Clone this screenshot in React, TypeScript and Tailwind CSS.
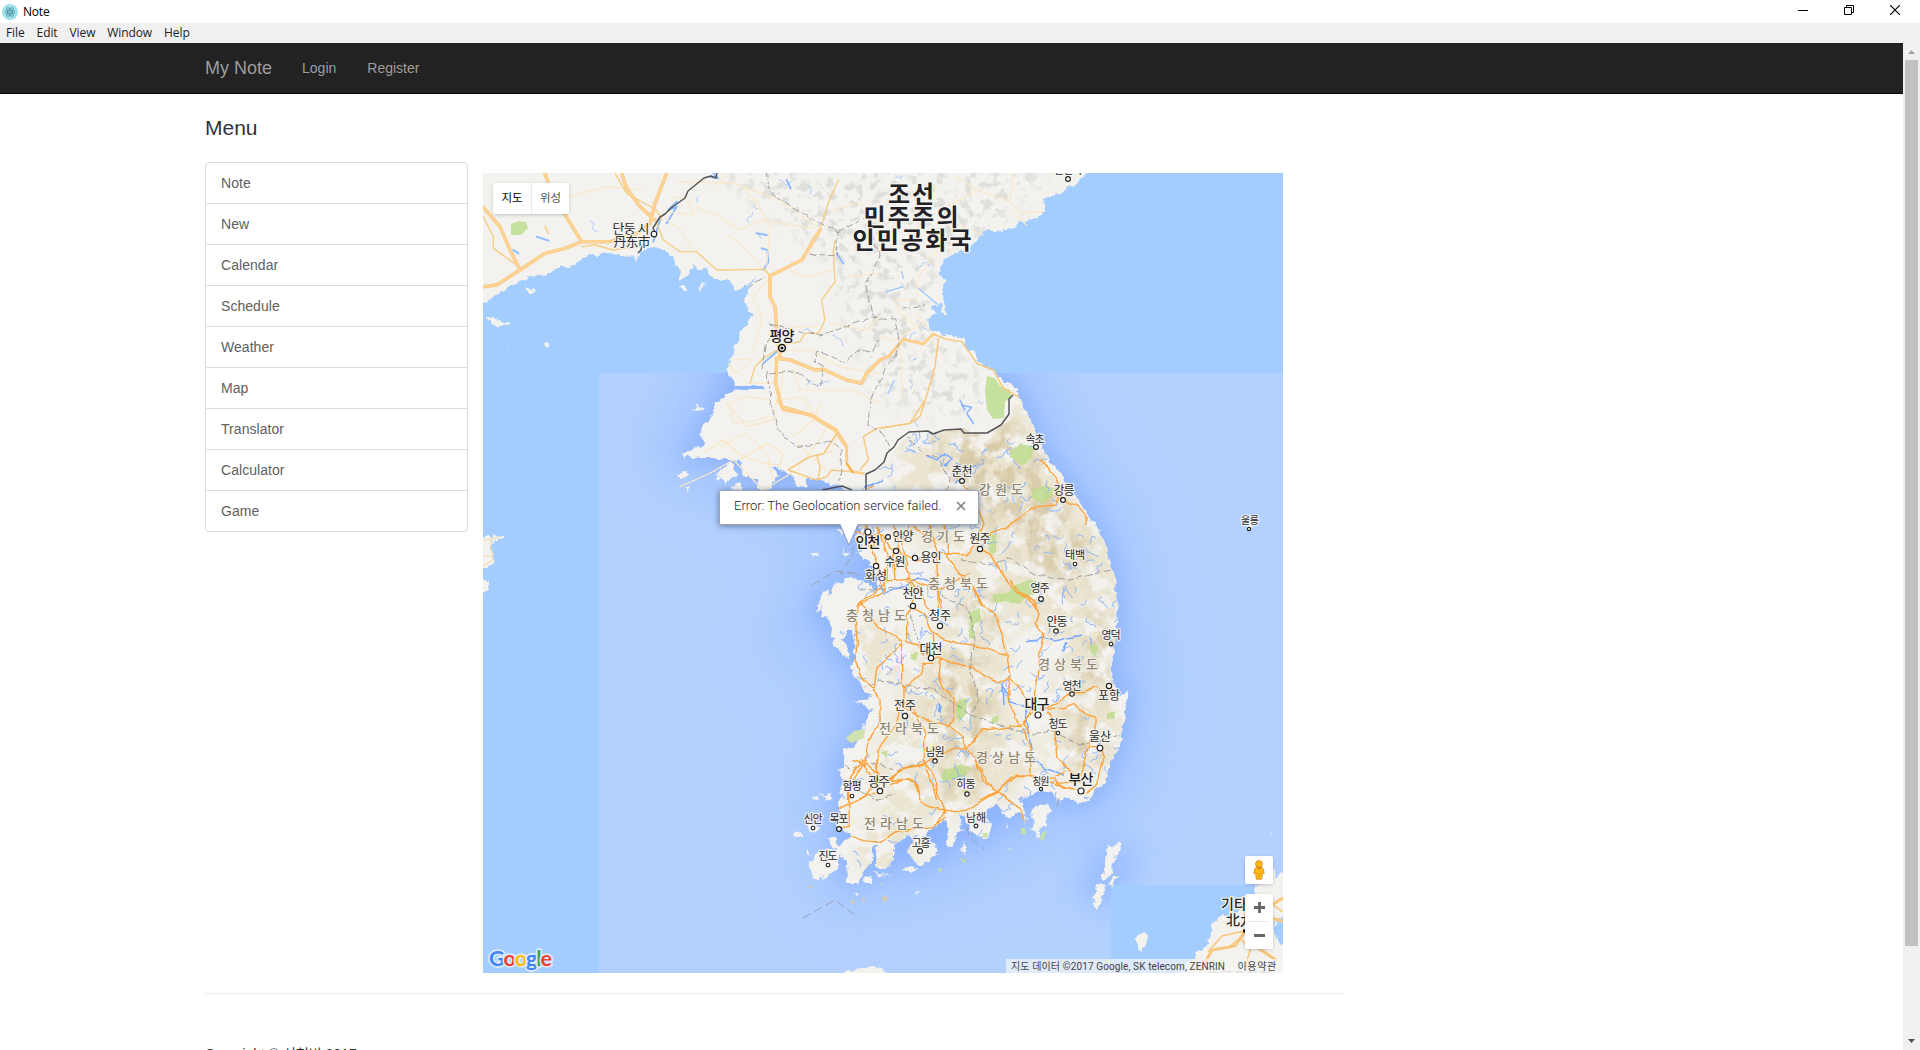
import React from "react";

const KR = '"Roboto", "Noto Sans CJK KR", sans-serif';

const menuItems = ["Note", "New", "Calendar", "Schedule", "Weather", "Map", "Translator", "Calculator", "Game"];

const MAINLAND =
  "M470 160 L470 307 L483 303 L492 297 L500 293 L513 285 L530 278 L550 273 L558 267 L575 265 L580 260 L593 255 L613 254 L627 257 L632 254 L636 263 L640 252 L653 247 L663 250 L673 257 L677 267 L681 269 L679 281 L688 275 L693 265 L700 270 L707 267 L710 275 L718 282 L728 280 L738 291 L747 285 L757 277 L750 286 L747 292 L745 303 L752 315 L742 330 L736 345 L732 357 L726 370 L735 382 L733 392 L725 397 L713 403 L715 410 L707 423 L700 432 L704 443 L695 449 L682 453 L684 457 L693 458 L710 457 L718 460 L727 459 L740 460 L743 475 L757 480 L758 489 L770 489 L778 476 L772 466 L781 471 L793 475 L797 487 L808 488 L806 478 L820 480 L840 487 L855 495 L857 524 L862 532 L853 537 L863 547 L857 553 L866 560 L873 567 L879 580 L876 588 L863 582 L850 577 L843 581 L833 586 L831 596 L827 588 L819 602 L815 612 L823 606 L821 618 L828 617 L832 630 L834 645 L846 658 L851 655 L843 640 L846 628 L853 630 L855 645 L855 663 L851 668 L857 680 L863 690 L872 697 L862 701 L853 702 L872 708 L864 723 L862 735 L855 745 L843 750 L845 762 L837 772 L843 780 L840 790 L843 797 L839 803 L841 815 L837 824 L852 835 L843 842 L835 852 L847 861 L848 883 L858 883 L863 872 L872 863 L873 845 L877 843 L876 867 L887 868 L893 860 L893 847 L907 835 L918 837 L910 845 L906 852 L911 857 L916 865 L923 867 L938 853 L936 845 L928 842 L931 838 L923 837 L934 827 L944 820 L948 830 L946 843 L952 848 L957 835 L963 830 L958 815 L966 817 L970 832 L976 836 L990 838 L991 826 L986 812 L997 804 L1005 815 L1010 819 L1020 812 L1028 823 L1024 808 L1018 800 L1028 797 L1040 790 L1053 792 L1058 802 L1065 797 L1077 803 L1087 800 L1097 790 L1105 783 L1110 763 L1115 755 L1120 747 L1121 735 L1123 723 L1126 705 L1128 690 L1118 697 L1115 687 L1110 670 L1112 660 L1116 640 L1118 623 L1115 610 L1117 605 L1115 577 L1108 560 L1107 547 L1098 528 L1087 513 L1077 497 L1063 477 L1052 463 L1043 450 L1037 437 L1032 423 L1020 397 L1017 388 L1003 383 L997 373 L980 362 L968 347 L963 338 L952 335 L942 335 L930 328 L928 320 L937 312 L930 307 L942 303 L943 315 L946 315 L944 298 L942 290 L946 282 L940 275 L940 267 L948 257 L960 252 L970 250 L975 242 L985 230 L1003 232 L1013 227 L1015 230 L1020 222 L1033 218 L1045 212 L1043 198 L1063 192 L1077 182 L1087 173 L1090 160 Z";

const ISLANDS =
  "M526 289l6-1l2 4l-4 2zM487 317l12 3l9 4l-1 3l-10-2l-11-4zM545 344l3 -3v7zM507 347l2 0l-1 3zM679 286l6 0l2 4l-3 0zM698 289l7-8l1 5l-5 7zM692 409l6-3l5 3l-4 2zM677 474l9-3l3 3l-8 5zM684 489l4-3l-1 5zM713 475l12-9l5-4l4 5l2 9l-6 3l-6 6l-2-6l-6-2l4-3zM732 486l7-2l4 6l-10 0zM838 530l5-1l-1 6zM843 550l8 4l-7 1zM813 554l2-1l3 3l-3 2zM811 870l-2-7l7-9l14-6l8 7l0 14l-12 8l-13 2zM812 797l6-3l2 4l-8 1zM820 795l12-1l1 5l-7 3zM793 835l6-3l4 3l-6 3zM805 825l14 2l-4 6zM805 851l4-2l0 8zM828 837l6 0l6 14l-8-4zM863 877l9-2l-1 10l-7 0zM874 872l10 2l-5 4zM885 874l4 1l-3 2zM903 870l7-5l6 4l-4 4zM960 849l4-7l3 3l-1 9zM1030 818l5-12l12-3l6 9l-6 2l-1 11l-4 1l-4 12l-3-8l-6-1l6-7zM1106 849l16-7l0 6l-8 8l-2 17l-8 8l-2-1l3-17zM1096 883l10 3l-3 10l-6 12l-4-2zM1113 876l4 0l-5 10l-3-3zM843 974l8-4l18-3l14 2l5 8h-40zM1137 936l5-3l6 4l-1 6l-7 8l-3-5zM1247 522l5-2l2 5l-5 3zM854 893l4 0l0 4zM916 893l3-1l-1 3zM1008 847l4 1l-4 1zM1005 825l4 2l-3 1zM1271 832l3 2l-2 1z";

const SHANDONG = "M470 535l14 1l10 0l10 1l-1 2l-7 0l-6 6l2 9l4 7l-4 4l-9 5h-14zM470 580l20 0l-1 9l-5 4l-14 0z";
const KYUSHU = "M1183 990l4-17l-6 2l7-14l8-4l0-5l6-3l6-4l3-20l10-9l10 2l8-8l12-8l6-18l2-7l10-4l4-4l0 9l3 0l10-8v46l-10 4l-4 12l10 12h10v60z";

const ROADS_SOUTH =
  "M255 10L215 45L175 70L165 110L172 190L165 240L180 285L220 325L240 355L240 430L205 480L195 540L155 610L145 660M180 62L215 120L245 150L280 165L305 185L305 310L315 325L315 380L340 400L375 420L410 430L450 440L490 470L500 505L525 535L560 600L585 635L540 660M235 0L245 20M320 0L345 30L335 75L320 110L320 185M320 185L355 195L365 215L395 235L415 235M330 80L370 100L385 130L400 155L430 175L480 193L560 203L600 222L620 225M410 0L415 35L425 90M400 155L402 220L420 235L415 275L430 320L462 355L460 410L445 445M305 190L230 265L222 330L235 350M520 20L550 75L585 105L605 160L620 220L630 290L625 360L650 420L670 450L690 500L693 590M630 0L655 35L705 65L715 100L705 130L732 160L720 210L715 290L700 340L705 375M420 235L470 255L515 258L550 285L590 305L630 295L655 315L680 360L690 400L675 430L600 445L545 450L500 505L450 510L405 535L370 550L310 565L270 595L240 630M315 325L360 285L370 250L400 250M300 380L290 430L240 500L230 560L240 600L180 660M190 540L235 580M340 385L375 460L372 550L400 620L410 660M270 600L330 600L350 620L360 660M705 390L670 430L690 460M720 385L745 380L785 360L820 335L850 335L885 320L925 345M745 385L790 385L825 370L855 405L885 415L885 460M745 395L765 450L770 530L810 570L830 590M840 590L860 520L870 480M870 500L900 500L910 530L890 610L860 640M693 590L635 590L600 630L580 640M693 590L760 595L790 625L830 630M760 590L800 575";
const ROADS_GANGWON =
  "M105 435L120 500L160 595L165 630L80 680M75 455L160 470L180 505L260 540L330 520L410 525L440 490L490 455L530 440L590 400L620 380L680 375L685 310L660 265L630 240M690 350L740 375L768 410L768 435M450 505L490 530L520 590L560 640L600 660L625 690M445 390L462 430L440 490M400 315L410 330M345 430L355 500L350 530L390 580L420 610L460 680M195 435L205 500L240 600L270 640L300 690M300 435L320 510L325 690M140 440L175 530L170 600M235 435L215 490L235 560M250 435L285 470L310 480M165 600L235 595L330 630L420 580M190 520L195 600M150 445L130 500M120 460L110 435";
const ROADS_JEOLLA =
  "M150 145L175 130L270 92M185 0L220 10L270 92M260 0L270 60M220 0L175 60L178 200L150 205M185 228L220 245L270 250L320 215L380 205L430 200L465 172M300 70L350 58L380 75L390 125L430 145L500 155L530 150L620 95L680 45L720 50M555 0L580 60L620 95L690 145L710 190M400 0L440 60L440 100L465 160M400 15L340 25L300 60M440 190L465 150M720 50L800 75L850 90M800 70L870 65";

const ROADS_NORTH_BIG =
  "M10 350L50 345L120 300L195 250L255 235L305 215L390 215L470 190L510 160L525 100L560 10M195 10L215 70L305 215M10 112L60 170L90 240L120 300M425 10L440 55L480 110L525 150M1020 180L965 270L905 300L870 318L870 380L885 410L890 480L900 560M890 565L930 570L1005 600L1030 598L1100 630L1145 640L1160 610L1200 570M890 565L887 640L905 710L990 735L1065 780L1100 830";
const ROADS_NORTH_MID =
  "M530 160L550 210L600 245L650 245L710 300L855 298L868 315M405 10L440 70L530 120L545 150M305 230L345 225L400 240L470 230M10 140L40 200L40 235L110 285M890 540L850 565L825 590L810 640M905 525L960 515L975 490L1015 490L1035 450L1025 390L1065 335L1060 240L1065 210M1020 180L1045 100L1075 30M205 190L195 170";
const ROADS_NORTH_THIN =
  "M200 50L270 80L380 50L490 60M560 125L640 135L620 90L580 80M650 110L720 140L780 180L850 150L1000 175M550 140L600 180L640 240M590 35L760 40L900 90L1010 170M870 320L790 230L740 190M870 320L820 380L845 450L820 540M905 540L990 540L1080 590L1200 610M1100 320L1200 310M930 300L980 320L1060 300M760 570L820 565L770 610L745 580M890 500L940 470L1010 470M910 600L900 690L970 680L1000 730M870 690L800 680L750 700L760 760L830 750L870 740M940 600L960 660L1120 660L1200 700M720 830L800 790L860 850L880 930M810 640L890 640M1050 460L1160 480L1200 440M780 40L830 100L870 170L860 290M1060 120L1130 100L1200 130M690 910L760 870L850 960L950 900L1010 820L1050 760M600 950L690 910M850 960L860 1040M700 60L740 10M950 820L1040 900";

const RIVERS_BIG =
  "M560 160L590 110L565 120L590 95M700 10L715 25L690 20M845 235L862 240L865 275L850 300M540 150L520 215M760 655L800 658L820 648L850 655M830 190L860 195M1070 250L1090 280M920 30L932 55M170 200L205 212M100 240L115 250M890 545L850 580";

const SOUTH_CLIP =
  "M860 500L866 480L885 461L905 439L914 431L935 432L965 428L970 432L993 432L1010 420L1014 400L1017 396L1040 390L1150 480V900H760V500Z";

type Label = [string, number, number, number, number, number?];
const cities: Label[] = [
  ["단둥 시", 631, 228, 37, 13], ["丹东市", 632, 241, 37, 13],
  ["속초", 1035, 439, 19, 11], ["춘천", 962, 472, 21, 12], ["강릉", 1064, 491, 21, 12], ["원주", 980, 539, 21, 12],
  ["안양", 903, 537, 21, 12], ["수원", 895, 562, 21, 12], ["용인", 931, 558, 21, 12], ["화성", 876, 576, 22, 12],
  ["천안", 913, 594, 21, 12], ["영주", 1040, 588, 19, 11], ["태백", 1075, 555, 20, 11], ["청주", 940, 616, 22, 12],
  ["안동", 1057, 622, 21, 12], ["영덕", 1111, 635, 19, 11], ["대전", 931, 648, 23, 13], ["영천", 1072, 686, 19, 11],
  ["포항", 1109, 696, 22, 12], ["전주", 905, 706, 22, 12], ["청도", 1058, 724, 19, 11], ["울산", 1100, 737, 22, 12],
  ["남원", 935, 752, 19, 11], ["창원", 1041, 781, 17, 10], ["광주", 879, 781, 22, 13], ["함평", 852, 786, 19, 11],
  ["하동", 966, 784, 19, 11], ["신안", 813, 819, 19, 11], ["목포", 839, 819, 19, 11], ["남해", 976, 818, 20, 11],
  ["고흥", 921, 843, 19, 11], ["진도", 828, 856, 19, 11], ["울릉", 1250, 520, 18, 10], ["단천시", 1068, 170, 28, 11],
];
const bigCities: Label[] = [
  ["평양", 782, 336, 25, 14], ["인천", 868, 542, 25, 14], ["대구", 1037, 704, 25, 14], ["부산", 1081, 779, 25, 14],
];
const provinces: Label[] = [
  ["강원도", 1001, 489, 44, 13], ["경기도", 943, 536, 44, 13], ["충청북도", 958, 583, 60, 13], ["충청남도", 876, 615, 60, 13],
  ["경상북도", 1068, 664, 60, 13], ["전라북도", 909, 728, 60, 13], ["경상남도", 1006, 757, 60, 13], ["전라남도", 894, 823, 60, 13],
];
const countries: Label[] = [
  ["조선", 911, 194, 46, 24], ["민주주의", 911, 217, 95, 24], ["인민공화국", 912, 240, 119, 24],
];
const dots: [number, number, number][] = [
  [654, 234, 2.8], [1036, 447, 2.4], [962, 481, 2.4], [1063, 500, 2.4], [980, 549, 2.6], [868, 532, 3], [888, 537, 2.4],
  [896, 551, 2.6], [915, 558, 2.6], [876, 566, 2.6], [913, 606, 2.6], [1041, 599, 2.4], [1075, 564, 1.8], [940, 626, 2.6],
  [1056, 631, 2.2], [1111, 644, 1.8], [931, 658, 2.7], [1072, 694, 2.2], [1109, 686, 2.6], [1038, 715, 3], [905, 716, 2.6],
  [1058, 733, 1.8], [1100, 748, 2.8], [935, 761, 2.2], [1041, 789, 1.6], [1081, 791, 3], [880, 791, 2.7], [852, 796, 1.8],
  [967, 794, 2.2], [813, 828, 1.8], [839, 829, 2.4], [976, 826, 1.9], [920, 851, 2.4], [828, 865, 1.8], [1249, 529, 1.6], [1068, 179, 2.4],
];

// Repeatable pseudo-random streams scattered over the terrain.
function makeStreams(count: number, x0: number, y0: number, w: number, h: number, seed: number) {
  let s = seed;
  const rnd = () => {
    s = (s * 16807) % 2147483647;
    return s / 2147483647;
  };
  let d = "";
  for (let i = 0; i < count; i++) {
    d += `M${(x0 + rnd() * w).toFixed(1)} ${(y0 + rnd() * h).toFixed(1)}`;
    let a = rnd() * 6.28;
    const n = 3 + Math.floor(rnd() * 5);
    for (let k = 0; k < n; k++) {
      a += (rnd() - 0.5) * 2.6;
      d += `l${(Math.cos(a) * 2.4).toFixed(1)} ${(Math.sin(a) * 2.4).toFixed(1)}`;
    }
  }
  return d;
}
const southStreams = makeStreams(300, 850, 430, 280, 430, 77);
const northStreams = makeStreams(30, 490, 175, 500, 290, 1213);

function Labels({ items, fill, weight, halo }: { items: Label[]; fill: string; weight: number; halo: number }) {
  return (
    <g
      fontFamily='"Noto Sans CJK KR", sans-serif'
      fontWeight={weight}
      fill={fill}
      stroke="#f5f4f0"
      strokeWidth={halo}
      strokeOpacity="0.85"
      strokeLinejoin="round"
      paintOrder="stroke"
      textAnchor="middle"
    >
      {items.map(([t, x, y, w, size]) => (
        <text key={t} x={x} y={y + size * 0.36} fontSize={size} textLength={w}>
          {t}
        </text>
      ))}
    </g>
  );
}

function KoreaMap() {
  return (
    <svg className="block h-[800px] w-[800px]" viewBox="483 173 800 800">
      <defs>
        <filter id="coast" x="-5%" y="-5%" width="110%" height="110%" colorInterpolationFilters="sRGB">
          <feTurbulence type="fractalNoise" baseFrequency="0.14" numOctaves="3" seed="4" />
          <feDisplacementMap in="SourceGraphic" scale="8" xChannelSelector="R" yChannelSelector="G" />
        </filter>
        <filter id="wobble" x="-5%" y="-5%" width="110%" height="110%" colorInterpolationFilters="sRGB">
          <feTurbulence type="fractalNoise" baseFrequency="0.08" numOctaves="2" seed="9" />
          <feDisplacementMap in="SourceGraphic" scale="5" xChannelSelector="R" yChannelSelector="G" />
        </filter>
        <filter id="soft" filterUnits="userSpaceOnUse" x="400" y="100" width="950" height="950"><feGaussianBlur stdDeviation="13" /></filter>
        <filter id="wide" filterUnits="userSpaceOnUse" x="400" y="100" width="950" height="950"><feGaussianBlur stdDeviation="32" /></filter>
        <filter id="blob"><feGaussianBlur stdDeviation="10" /></filter>
        <filter id="tan" x="0" y="0" width="100%" height="100%" colorInterpolationFilters="sRGB">
          <feTurbulence type="fractalNoise" baseFrequency="0.045 0.055" numOctaves="5" seed="21" />
          <feColorMatrix values="0 0 0 0 0.918  0 0 0 0 0.894  0 0 0 0 0.816  9 0 0 0 -3.7" />
        </filter>
        <filter id="brown" x="0" y="0" width="100%" height="100%" colorInterpolationFilters="sRGB">
          <feTurbulence type="fractalNoise" baseFrequency="0.07 0.06" numOctaves="5" seed="33" />
          <feColorMatrix values="0 0 0 0 0.80  0 0 0 0 0.73  0 0 0 0 0.56  5 0 0 0 -2.1" />
        </filter>
        <filter id="relief" x="0" y="0" width="100%" height="100%" colorInterpolationFilters="sRGB">
          <feTurbulence type="fractalNoise" baseFrequency="0.11" numOctaves="4" seed="5" />
          <feColorMatrix values="0 0 0 0 0.87  0 0 0 0 0.87  0 0 0 0 0.855  7 0 0 0 -3.7" />
        </filter>
        <clipPath id="landClip"><path d={MAINLAND} /></clipPath>
        <clipPath id="southClip"><path d={SOUTH_CLIP} /></clipPath>
        <clipPath id="paleSea"><path d="M599 373H1283V885H1111V973H599Z" /></clipPath>
        <mask id="hills" maskUnits="userSpaceOnUse" x="483" y="173" width="800" height="800">
          <g fill="#fff" filter="url(#blob)">
            <path d="M895 440L1020 395L1070 490L1125 570L1112 660L1060 655L1000 610L930 560L890 490Z" />
            <path d="M920 660L955 590L1010 630L1010 720L1060 770L970 815L900 830L865 780L890 720Z" />
            <ellipse cx="1085" cy="715" rx="38" ry="65" /><ellipse cx="880" cy="650" rx="30" ry="35" /><ellipse cx="885" cy="845" rx="30" ry="30" />
          </g>
        </mask>
        <mask id="peaks" maskUnits="userSpaceOnUse" x="483" y="173" width="800" height="800">
          <g fill="#fff" opacity="0.85" filter="url(#blob)">
            <path d="M925 440L1010 420L1055 490L1100 560L1060 590L1005 535L950 490Z" />
            <ellipse cx="962" cy="705" rx="30" ry="60" /><ellipse cx="1098" cy="650" rx="14" ry="50" /><ellipse cx="1085" cy="735" rx="16" ry="40" />
            <ellipse cx="985" cy="610" rx="26" ry="18" /><ellipse cx="960" cy="780" rx="26" ry="20" />
          </g>
        </mask>
        <mask id="northHills" maskUnits="userSpaceOnUse" x="483" y="173" width="800" height="800">
          <path fill="#fff" filter="url(#blob)" d="M700 160L1060 160L1000 230L940 260L930 320L990 380L960 420L880 400L850 330L830 260Z" />
        </mask>
      </defs>

      <path fill="#a3ccff" d="M483 173H1283V973H483Z" />
      <g clipPath="url(#paleSea)">
        <path fill="#b3d1ff" d="M483 173H1283V973H483Z" />
        <path d={MAINLAND} fill="#8db3fd" stroke="#8db3fd" strokeWidth="50" opacity="0.4" filter="url(#wide)" />
        <path d={MAINLAND} fill="#80a9fb" stroke="#80a9fb" strokeWidth="10" opacity="0.65" filter="url(#soft)" />
        <path d="M1095 905L1120 845" stroke="#8db3fd" strokeWidth="44" opacity="0.6" filter="url(#soft)" />
      </g>

      <g filter="url(#coast)" fill="#f3f2ee">
        <path d={MAINLAND} />
        <path d={ISLANDS} />
        <path d={SHANDONG} />
        <path d={KYUSHU} />
      </g>
      <path d="M483 540L502 537M490 539L493 560L483 566M483 556L492 556" fill="none" stroke="#f5dcae" strokeWidth="1.2" />

      <g clipPath="url(#landClip)">
        <g mask="url(#northHills)"><rect x="483" y="173" width="800" height="300" filter="url(#relief)" /></g>
        <g clipPath="url(#southClip)">
          <g mask="url(#hills)"><rect x="830" y="390" width="310" height="490" filter="url(#tan)" /></g>
          <g mask="url(#peaks)"><rect x="830" y="390" width="310" height="490" opacity="0.7" filter="url(#brown)" /></g>
          <g fill="#bfdc8d" opacity="0.85" filter="url(#wobble)">
            <path d="M1010 451l12-8l13 4l-4 12l-7 6l-14-7zM1032 491l8-5l15 1l-4 10l-9 7l-10-6zM988 536l8-2l0 17l-7 4zM992 595l8-3l8 2l4-8l6-3l13-5l14 7l-12 12l-9 2l-5 5l-12-3l-13 2zM970 612l10-4l0 12l-6 5l1 14l-6-1zM959 700l9-2l-2 15l-8 9l-2-8zM992 718l8-4l-1 8l-6 2zM944 769l14-5l12 4l-5 9l-22 5l-3-7zM1090 645l8 2l-1 9l-8-4zM1107 712l8 0l-1 7l-7-1zM911 653l7-1l-2 9l-5-3zM882 752l6-1l-2 7zM963 792l5-3l1 7z" />
          </g>
          <path d={southStreams} fill="none" stroke="#86b1ff" strokeWidth="0.9" strokeLinejoin="round" />
          <g fill="none" stroke="#7aa9ff" strokeWidth="1.5" filter="url(#wobble)">
            <path d="M862 489l20-9M925 455l12 5l8-6l6 5l-6 7M956 462l10 8l12-4M963 478l-8 7M878 585l6 8l14-4l20-12l12 4M1004 705l-1-20l8 18l14 4l4 26l3 24l14 12l18 6M940 705l0 7M1027 643l16-5l12 3l26-6M1068 642l-6 10" />
            <path d="M938 704l3 3l-2 5z" fill="#7aa9ff" />
          </g>
        </g>
        <path d={northStreams} fill="none" stroke="#9cc4ff" strokeWidth="0.8" />
      </g>

      <path fill="#c5e19d" d="M987 376l8 2l5 8l10 4l1 7l-6 5l-1 16l-11 1l-6-9l-2-20z" />
      <path fill="#c5e19d" d="M511 224l8-3l7 1l2 6l-6 6l-2 1l-9 0z" />
      <path fill="#d0e2ae" d="M846 738l8-7l11-2l-1 9l-13 5z" />
      <path fill="#c5e19d" d="M1021 828l4 0l1 6l-5 0zM1042 833l4-2l-2 8l-4 2zM982 833l6 0l-2 6zM938 868l4 1l-3 4zM959 858l6 2l1 4zM880 883l3 0l-2 2z" />
      <path fill="#d4ccb3" d="M805 886l8 0l-1 2zM850 901l5-1l-2 5zM862 898l3 0l-1 7zM881 899l4-4l4 4l-4 3z" />

      <g transform="translate(480 170) scale(0.33333)" fill="none" strokeLinejoin="round" strokeLinecap="round">
        <path d={RIVERS_BIG} stroke="#90bdff" strokeWidth="6" />
        <path d="M750 655L790 650L845 655" stroke="#8fb5fc" strokeWidth="14" filter="url(#wobble)" />
        <path d={ROADS_NORTH_THIN} stroke="#fae8c8" strokeWidth="3.4" />
        <path d={ROADS_NORTH_MID} stroke="#f3cf87" strokeWidth="4.2" />
        <path d={ROADS_NORTH_BIG} stroke="#f2c27a" strokeWidth="10.5" />
        <path d={ROADS_NORTH_BIG} stroke="#fed393" strokeWidth="8" />
      </g>
      <g transform="translate(880 170) scale(0.33333)" fill="none" strokeLinejoin="round" strokeLinecap="round">
        <path d="M5 500L45 510L110 470L60 430L45 390L110 390L110 330L160 250L220 235M110 430L150 480M200 110L290 60L390 95L400 10M290 60L230 20M400 130L440 165M390 95L420 130L490 125M200 150L310 195M60 530L70 680" stroke="#fae8c8" strokeWidth="3.4" />
        <path d="M0 568L25 560L70 508L130 522L160 492" stroke="#fecf8a" strokeWidth="9" />
        <path d="M160 492L200 508L245 515L270 550L290 580L340 600L370 655L415 680M175 508L165 590L145 660L120 740L90 760L0 775" stroke="#f8c678" strokeWidth="4.2" />
        <path d="M240 690L255 720L245 705L275 712L260 730L280 760" stroke="#8db8ff" strokeWidth="5" />
        <path d="M115 355L175 405M65 305L70 325M20 365L70 350M100 570L108 565M25 670L42 632" stroke="#a0c8ff" strokeWidth="4" />
      </g>
      <g transform="translate(580 400) scale(0.33333)" fill="none" strokeLinejoin="round" strokeLinecap="round">
        <path d="M375 155L430 120L480 165L550 190L600 195L610 160L560 130L480 180M440 10L500 80L580 60L590 0M625 210L700 165L755 155L770 105M640 110L700 60L720 10" stroke="#fae5c0" strokeWidth="3.4" />
        <path d="M625 208L690 170L730 162L770 100M625 210L710 240L740 230L755 210L810 215M715 235L720 200L710 165M840 210L865 180L850 110L890 85L990 70L1035 0" stroke="#f6c97e" strokeWidth="4.2" />
        <path d="M595 0L610 30L695 45L770 90L800 140L800 190L815 215L850 220" stroke="#fecf8a" strokeWidth="8.5" />
        <path d="M800 190L820 218M865 265L880 258" stroke="#fda63d" strokeWidth="4" />
      </g>

      <g clipPath="url(#landClip)" fill="none" stroke="#9a9a9a" strokeWidth="0.9" strokeDasharray="7 2.5" filter="url(#wobble)">
        <path d="M766 173L772 195L800 212L818 222L838 232L836 255L822 256L808 253M838 232L880 210M868 225L880 255L866 285L872 315L880 320M767 372L770 400L778 430L785 437L796 448L830 441L842 450L840 480M769 374L795 371L820 387L823 365L814 362L818 350L845 362L860 350L872 352L879 340M770 324L795 330L820 335L850 325L870 318L895 320L900 345L880 380L870 400L868 425L884 435L890 450M904 308L925 305M748 288L765 278M762 370L765 345L780 325" />
        <path d="M910 440L925 455L938 457L950 480L945 500M960 560L990 565L1010 558L1035 575L1070 580L1110 570M860 590L900 588L930 585L945 598L970 610L975 640L970 670L980 700L970 715L935 690L905 685L880 680L850 695M970 715L1000 725L1030 735L1050 730L1080 745L1120 735M838 760L850 770L870 762L900 770L925 760M860 790L875 800L895 795M908 605L915 630L925 660" />
      </g>
      <path fill="none" stroke="#9ba2b3" strokeWidth="1" strokeDasharray="9 4" d="M812 585l24-14l16 2l-12 1l12-18l2-14M852 572l25 12M803 918l32-18l20 15M967 827l2 10l15 12M1057 807l3-13" />

      <g fill="none" stroke="#fda136" strokeWidth="1.25" strokeLinejoin="round">
        <g filter="url(#wobble)">
          <path transform="translate(800 580) scale(0.33333)" strokeWidth="4" d={ROADS_SOUTH} />
          <path transform="translate(830 380) scale(0.33333)" strokeWidth="4" d={ROADS_GANGWON} />
          <path transform="translate(790 760) scale(0.33333)" strokeWidth="4" d={ROADS_JEOLLA} />
        </g>
      </g>

      <path fill="none" stroke="#555558" strokeWidth="1.5" strokeLinejoin="round" d="M717 173l-1 5l-5-2l-7 2l-16 13l-3 7l-14 10l-6 6l-5 3l-7 11l2 5M642 245l-1 5l-3 3M822 490l20-4l10 4M866 490l0-16l9-4l9-8l3-9l7-6l4-7l11-8l19-1l5 3l11-4l17-1l3 4l23 0l14-8l8-11l0-15l4-4" />

      <g fill="none" stroke="#f9c77b">
        <path strokeWidth="3" d="M1200 972L1212 950L1235 946L1246 930L1258 948L1276 960M1270 906L1283 898M1270 918L1283 921" />
        <path strokeWidth="1.5" d="M1208 952L1222 936L1244 931M1230 946L1240 938L1250 950L1245 968M1266 900L1283 912M1190 970L1215 960" />
      </g>

      <Labels items={provinces} fill="#8f8672" weight={500} halo={2.2} />
      <Labels items={cities} fill="#2b2b2b" weight={400} halo={2.4} />
      <Labels items={bigCities} fill="#1b1b1b" weight={500} halo={2.6} />
      <Labels items={countries} fill="#222226" weight={700} halo={3} />
      <g fontFamily='"Noto Sans CJK KR", sans-serif' fontSize="14" fontWeight="500" fill="#25272b" stroke="#f5f4f0" strokeWidth="2.4" paintOrder="stroke">
        <text x="1221" y="909">기타큐슈</text>
        <text x="1226" y="925">北九州</text>
        <text x="1207" y="982" fontWeight="500" fill="#b3ab98">후쿠오카현</text>
      </g>
      <circle cx="1245" cy="931" r="2" />
      <g fill="#fff" stroke="#222" strokeWidth="1.15">
        {dots.map(([x, y, r]) => (
          <circle key={`${x}-${y}`} cx={x} cy={y} r={r} />
        ))}
      </g>
      <circle cx="782" cy="348" r="3.4" fill="#fff" stroke="#111" strokeWidth="1.5" />
      <circle cx="782" cy="348" r="1.6" fill="#111" />

      <text x="489" y="965.5" textLength="63" fontFamily='"Lato", sans-serif' fontSize="21.5" fontWeight="700" stroke="#dbe9ff" strokeWidth="3.5" strokeLinejoin="round" paintOrder="stroke">
        <tspan fill="#4285f4">G</tspan>
        <tspan fill="#ea4335">o</tspan>
        <tspan fill="#fbbc05">o</tspan>
        <tspan fill="#4285f4">g</tspan>
        <tspan fill="#34a853">l</tspan>
        <tspan fill="#ea4335">e</tspan>
      </text>
    </svg>
  );
}

function Pegman() {
  return (
    <svg className="h-[20px] w-[12px]" viewBox="0 0 12 20">
      <path d="M3 7.5Q1.2 8 .8 13.5H2.6L3.3 19.2H8.7L9.4 13.5H11.2Q10.800 8 9 7.500Z" fill="#fdb813" stroke="#d58a1d" strokeWidth=".8" />
      <circle cx="6" cy="4" r="3.400" fill="#fdb813" stroke="#c98723" strokeWidth=".8" />
      <path d="M3.500 7.300H8.500L6 9.800Z" fill="#e5751f" />
      <path d="M6 13V19" stroke="#d58a1d" strokeWidth=".7" />
    </svg>
  );
}

export default function App() {
  return (
    <div className="flex h-[1050px] w-[1920px] flex-col overflow-hidden bg-white font-['Liberation_Sans','Noto_Sans_CJK_KR',sans-serif] text-[14px] text-[#333]">
      <header className="flex h-[23px] shrink-0 items-center justify-between font-['Open_Sans',sans-serif] text-[12px] text-black">
        <div className="flex items-center gap-[5px] pl-[2px]">
          <svg className="h-4 w-4" viewBox="0 0 16 16">
            <circle cx="8" cy="8" r="8" fill="#9fe3ec" />
            <g fill="none" stroke="#4a8494" strokeWidth=".7">
              <ellipse cx="8" cy="8" rx="5" ry="2" />
              <ellipse cx="8" cy="8" rx="5" ry="2" transform="rotate(60 8 8)" />
              <ellipse cx="8" cy="8" rx="5" ry="2" transform="rotate(120 8 8)" />
            </g>
            <circle cx="8" cy="8" r=".8" fill="#4a8494" />
          </svg>
          <span className="tracking-[-0.2px]">Note</span>
        </div>
        <div className="flex items-center gap-[36px] pr-[20px] pb-[3px]">
          <svg className="h-[10px] w-[10px]" viewBox="0 0 10 10"><path d="M0 5.500H10" stroke="#000" /></svg>
          <svg className="h-[10px] w-[10px]" viewBox="0 0 10 10" fill="none" stroke="#000"><path d="M.5 2.500H7.500V9.500H.5ZM2.500 2.500V.5H9.500V7.500H7.500" /></svg>
          <svg className="h-[10px] w-[10px]" viewBox="0 0 10 10"><path d="M0 0L10 10M10 0L0 10" stroke="#000" strokeWidth="1.200" /></svg>
        </div>
      </header>
      <nav className="flex h-5 shrink-0 items-center gap-[12px] bg-[#f0f0f0] pl-[6px] font-['Open_Sans',sans-serif] text-[12px] tracking-[-0.1px] text-[#222]">
        <span>File</span>
        <span>Edit</span>
        <span>View</span>
        <span>Window</span>
        <span>Help</span>
      </nav>
      <div className="flex min-h-0 flex-1">
        <main className="min-w-0 flex-1">
          <div className="flex h-[51px] items-center border-b border-[#080808] bg-[#222] pl-[205px] text-[#9d9d9d]">
            <span className="text-[18px]">My Note</span>
            <span className="pl-[30px]">Login</span>
            <span className="pl-[31px]">Register</span>
          </div>
          <div className="w-[1345px] pl-[205px]">
            <h3 className="pt-[22px] text-[21px] leading-[24px]">Menu</h3>
            <div className="flex items-start pt-[22px]">
              <ul className="w-[263px] rounded-[4px] border border-[#ddd]">
                {menuItems.map((m) => (
                  <li key={m} className="h-[41px] border-b border-[#ddd] px-[15px] leading-[40px] tracking-[0.05px] text-[#606060] last:h-10 last:border-b-0">
                    {m}
                  </li>
                ))}
              </ul>
              <div className="relative mt-[11px] ml-[15px] h-[800px] w-[800px] overflow-hidden">
                <KoreaMap />
                <div className="absolute top-[10px] left-[10px] flex h-[31px] w-[76px] items-center rounded-[2px] bg-white text-center text-[11.5px] shadow-[0_1px_4px_-1px_rgba(0,0,0,0.3)]" style={{ fontFamily: KR }}>
                  <span className="w-[38px] text-black">지도</span>
                  <span className="h-full w-[38px] border-l border-[#e8e8e8] leading-[31px] text-[#565656]">위성</span>
                </div>
                <div className="absolute top-[317px] left-[236px] flex h-[35px] w-[260px] items-center rounded-[2px] border border-[#9aa5ba] bg-white pl-[14px] shadow-[0_1px_6px_rgba(40,60,100,0.6)]" style={{ fontFamily: KR }}>
                  <span className="w-[222px] pb-[3px] text-[13px] font-light whitespace-nowrap text-[#222]">Error: The Geolocation service failed.</span>
                  <svg className="mb-1 h-[10px] w-[10px]" viewBox="0 0 10 10"><path d="M1 1L9 9M9 1L1 9" stroke="#808080" strokeWidth="1.600" /></svg>
                </div>
                <svg className="absolute top-[351px] left-[355px] h-[24px] w-[22px]" viewBox="0 0 22 24">
                  <path d="M2 0L11 21L20 0Z" fill="#fff" />
                  <path d="M2 .5L11 21L20 .5" fill="none" stroke="#7484a6" strokeOpacity=".7" />
                </svg>
                <div className="absolute top-[683px] left-[762px] flex h-7 w-7 items-center justify-center rounded-[2px] bg-white shadow-[0_1px_4px_-1px_rgba(0,0,0,0.3)]">
                  <Pegman />
                </div>
                <div className="absolute top-[721px] left-[762px] h-[55px] w-7 rounded-[2px] bg-white shadow-[0_1px_4px_-1px_rgba(0,0,0,0.3)]">
                  <svg className="h-[55px] w-7" viewBox="0 0 28 55">
                    <path d="M9 13.500H20M14.500 8V19M9 41.500H20" stroke="#666" strokeWidth="2.800" />
                    <path d="M4 27.500H23" stroke="#e6e6e6" />
                  </svg>
                </div>
                <div className="absolute right-0 bottom-0 flex h-[14px] w-[277px] items-center justify-between bg-[#f5f5f5]/70 pr-[6px] pl-[5px] text-[10px] whitespace-nowrap text-[#444]" style={{ fontFamily: KR }}>
                  <span className="tracking-[0.11px]">지도 데이터 ©2017 Google, SK telecom, ZENRIN</span>
                  <span className="tracking-[0.7px]">이용약관</span>
                </div>
              </div>
            </div>
            <hr className="mt-5 w-[1140px] border-[#eee]" />
            <p className="mt-[50px] leading-5 whitespace-nowrap">Copyright © 신현빈 2017</p>
          </div>
        </main>
        <aside className="flex w-[17px] shrink-0 flex-col items-center bg-[#f0f0f0]">
          <svg className="h-[17px] w-[17px]" viewBox="0 0 17 17"><path d="M5 11H12L8.500 7Z" fill="#a3a3a3" /></svg>
          <div className="h-[886px] w-[13px] bg-[#c1c1c1]" />
          <svg className="mt-auto h-[17px] w-[17px]" viewBox="0 0 17 17"><path d="M5 6H12L8.500 10Z" fill="#505050" /></svg>
        </aside>
      </div>
    </div>
  );
}
